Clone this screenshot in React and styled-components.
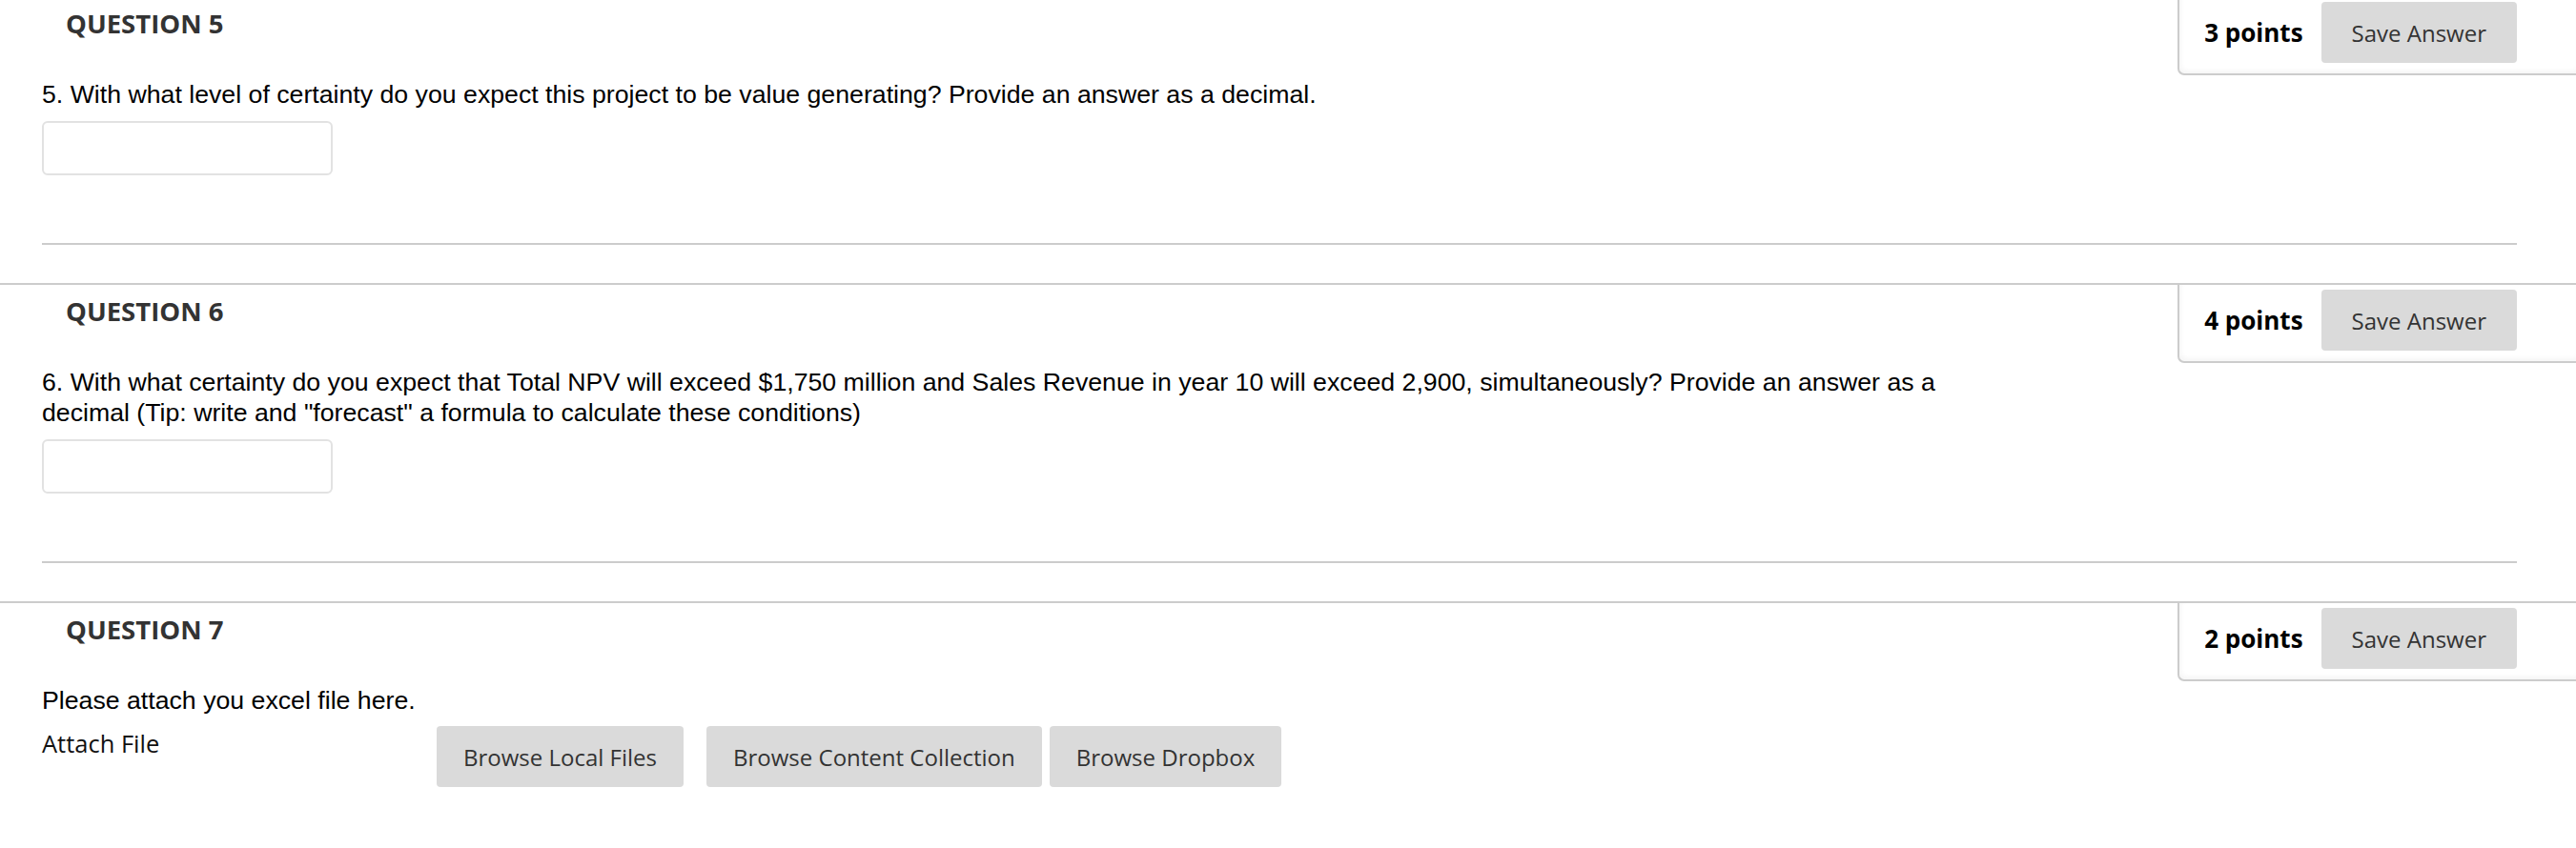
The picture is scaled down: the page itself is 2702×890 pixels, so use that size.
import React from 'react';
import styled, { createGlobalStyle } from 'styled-components';

const GlobalStyle = createGlobalStyle`
  html, body {
    margin: 0;
    padding: 0;
    background: #ffffff;
    overflow: hidden;
  }
  * {
    box-sizing: border-box;
  }
`;

const questions = [
  {
    id: 5,
    points: 3,
    text: '5. With what level of certainty do you expect this project to be value generating? Provide an answer as a decimal.',
    kind: 'input',
  },
  {
    id: 6,
    points: 4,
    text: '6. With what certainty do you expect that Total NPV will exceed $1,750 million and Sales Revenue in year 10 will exceed 2,900, simultaneously? Provide an answer as a decimal (Tip: write and "forecast" a formula to calculate these conditions)',
    kind: 'input',
  },
  {
    id: 7,
    points: 2,
    text: 'Please attach you excel file here.',
    kind: 'file',
  },
];

const Question = ({ q, last }) => (
  <Section>
    <HeaderRow>
      <QuestionTitle>QUESTION {q.id}</QuestionTitle>
      <PointsBox>
        <Points>{q.points} points</Points>
        <SaveButton type='button'>Save Answer</SaveButton>
      </PointsBox>
    </HeaderRow>
    <Body>
      <QuestionText>{q.text}</QuestionText>
      {q.kind === 'input' && <AnswerInput type='text' />}
      {q.kind === 'file' && (
        <AttachRow>
          <AttachLabel>Attach File</AttachLabel>
          <BrowseGroup>
            <BrowseButton type='button'>Browse Local Files</BrowseButton>
            <BrowseButton type='button' gap={24}>
              Browse Content Collection
            </BrowseButton>
            <BrowseButton type='button' gap={8}>
              Browse Dropbox
            </BrowseButton>
          </BrowseGroup>
        </AttachRow>
      )}
      {!last && <Divider />}
    </Body>
  </Section>
);

export default function App() {
  return (
    <>
      <GlobalStyle />
      <Page>
        {questions.map((q, i) => (
          <Question key={q.id} q={q} last={i === questions.length - 1} />
        ))}
      </Page>
    </>
  );
}

const Page = styled.main`
  margin-top: -5px;
  width: 100%;
`;

const Section = styled.section`
  border-top: 2px solid #cccccc;
`;

const HeaderRow = styled.div`
  display: flex;
  justify-content: space-between;
  align-items: flex-start;
  padding-left: 69px;
`;

const QuestionTitle = styled.h2`
  margin: 0;
  padding-top: 9px;
  font-family: 'Open Sans', 'Liberation Sans', sans-serif;
  font-weight: 700;
  font-size: 27.5px;
  line-height: 37px;
  color: #333333;
`;

const PointsBox = styled.div`
  display: flex;
  align-items: center;
  padding: 5px 62px 11px 26px;
  border-left: 2px solid #cccccc;
  border-bottom: 2px solid #cccccc;
  border-bottom-left-radius: 7px;
  box-shadow: inset 2px -3px 5px rgba(0, 0, 0, 0.04);
`;

const Points = styled.span`
  font-family: 'Open Sans', 'Liberation Sans', sans-serif;
  font-weight: 700;
  font-size: 26px;
  color: #000000;
  margin-right: 19px;
`;

const SaveButton = styled.button`
  height: 64px;
  padding: 0 32px;
  border: none;
  border-radius: 4px;
  background: #dadada;
  color: #333333;
  font-family: 'Open Sans', 'Liberation Sans', sans-serif;
  font-size: 24px;
`;

const Body = styled.div`
  padding: 4px 62px 0 44px;
`;

const QuestionText = styled.p`
  margin: 0;
  max-width: 2040px;
  font-family: 'Liberation Sans', Arial, sans-serif;
  font-size: 26.7px;
  line-height: 32px;
  color: #000000;
`;

const AnswerInput = styled.input`
  display: block;
  margin-top: 12px;
  width: 305px;
  height: 57px;
  border: 2px solid #e2e2e2;
  border-radius: 6px;
  background: #ffffff;
`;

const Divider = styled.hr`
  margin: 71px 0 40px;
  border: none;
  border-top: 2px solid #cccccc;
  height: 0;
`;

const AttachRow = styled.div`
  display: flex;
  align-items: flex-start;
  margin-top: 11px;
`;

const AttachLabel = styled.span`
  width: 414px;
  padding-top: 1px;
  font-family: 'Open Sans', 'Liberation Sans', sans-serif;
  font-size: 25.5px;
  color: #111111;
`;

const BrowseGroup = styled.div`
  display: flex;
`;

const BrowseButton = styled.button`
  height: 64px;
  margin-left: ${(p) => p.gap || 0}px;
  padding: 0 28px;
  border: none;
  border-radius: 4px;
  background: #dadada;
  color: #333333;
  font-family: 'Open Sans', 'Liberation Sans', sans-serif;
  font-size: 24px;
`;
